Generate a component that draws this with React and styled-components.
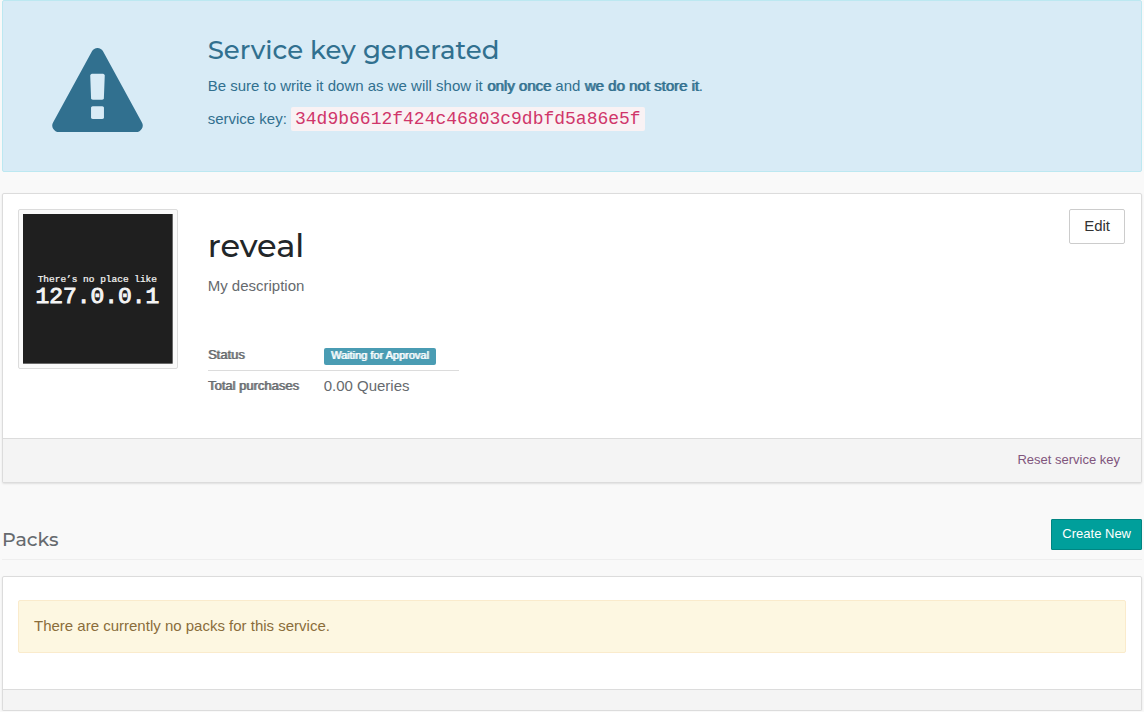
import React from "react";
import styled, { createGlobalStyle } from "styled-components";

const GlobalStyle = createGlobalStyle`
  *, *::before, *::after { box-sizing: border-box; }
  body {
    margin: 0;
    background: #f9f9f9;
    color: #666a6e;
    font: 15px/22px "Liberation Sans", Arial, sans-serif;
  }
  h1, h2, h3, p { margin: 0; }
`;

const headingFont = `Montserrat, Inter, sans-serif`;

const Page = styled.main`
  padding: 0 2px;
`;

const KeyAlert = styled.section`
  display: flex;
  padding: 34px 0 30px;
  margin-bottom: 21px;
  color: #31708f;
  background: #d8ebf6;
  border: 1px solid #bce8f1;
  border-radius: 2px;
`;

const Side = styled.div`
  flex: 0 0 calc(100% / 6);
  padding: 0 15px;
`;

const AlertSide = styled(Side)`
  padding-top: 13px;
`;

const Main = styled.div`
  flex: 1;
  padding: 0 15px;
`;

const WarningIcon = styled.svg`
  display: block;
  width: 91px;
  height: 84px;
  margin: 0 auto;
  fill: currentColor;
`;

const AlertTitle = styled.h2`
  margin-bottom: 9px;
  font: 500 26px/31px ${headingFont};
`;

const Line = styled.p`
  margin-bottom: 11px;
`;

const Strong = styled.strong`
  font-weight: 400;
  text-shadow: 1px 0 color-mix(in srgb, currentColor 85%, transparent);
`;

const Key = styled.code`
  padding: 2px 4px;
  color: #d0366a;
  background: #f9f2f4;
  border-radius: 2px;
  font: 18px/20px "Liberation Mono", monospace;
`;

const Panel = styled.section`
  background: #fff;
  border: 1px solid #dcdcdc;
  border-radius: 2px;
  box-shadow: 0 1px 2px rgba(0, 0, 0, 0.1);
`;

const ServiceBody = styled.div`
  display: flex;
  padding: 15px 0 37px;
`;

const PanelFooter = styled.footer`
  min-height: 21px;
  padding: ${(p) => (p.$filled ? "10px 21px 11px" : "0")};
  text-align: right;
  background: #f4f4f4;
  border-top: 1px solid #dcdcdc;
  font-size: 13px;
`;

const Thumbnail = styled.svg`
  display: block;
  width: 100%;
  padding: 4px;
  background: #fafafa;
  border: 1px solid #dcdcdc;
  border-radius: 2px;
  font-family: "Liberation Mono", monospace;
`;

const ServiceInfo = styled(Main)`
  padding-top: 18px;
`;

const ServiceName = styled.h1`
  margin-bottom: 10px;
  color: #222629;
  font: 500 32px/38px ${headingFont};
`;

const Facts = styled.table`
  width: 251px;
  margin-top: 43px;
  border-collapse: collapse;

  tr + tr { border-top: 1px solid #dcdcdc; }
  th {
    width: 116px;
    padding: 4px 0;
    font-size: 13px;
    font-weight: 400;
    text-align: left;
  }
  td { padding: 4px 0; }
`;

const Badge = styled.span`
  display: block;
  width: max-content;
  padding: 0 7px 2px;
  margin-top: 2px;
  color: #fff;
  background: #4a9cb3;
  border-radius: 2px;
  font-size: 11px;
  line-height: 15px;
`;

const Actions = styled.div`
  padding-right: 16px;
`;

const Button = styled.button`
  padding: ${(p) => (p.$primary ? "3px 10px 5px" : "6px 14px 7px")};
  color: ${(p) => (p.$primary ? "#fff" : "#333")};
  background: ${(p) => (p.$primary ? "#009f9b" : "#fff")};
  border: 1px solid ${(p) => (p.$primary ? "#008582" : "#ccc")};
  border-radius: ${(p) => (p.$primary ? "1px" : "2px")};
  font: inherit;
  font-size: ${(p) => (p.$primary ? "13px" : "15px")};
  line-height: ${(p) => (p.$primary ? "21px" : "20px")};
  cursor: pointer;
`;

const ResetLink = styled.a`
  color: #80557c;
  text-decoration: none;
`;

const SectionHeader = styled.header`
  display: flex;
  justify-content: space-between;
  align-items: center;
  padding-bottom: 9px;
  margin: 36px 0 16px;
  border-bottom: 1px solid #eee;
`;

const SectionTitle = styled.h3`
  padding-top: 10px;
  font: 500 19px/21px ${headingFont};
`;

const PacksBody = styled.div`
  padding: 23px 15px 36px;
`;

const Notice = styled.p`
  padding: 14px 15px 15px;
  color: #8a6d3b;
  background: #fdf7e1;
  border: 1px solid #faebcc;
  border-radius: 2px;
`;

export default function App() {
  return (
    <>
      <GlobalStyle />
      <Page>
        <KeyAlert role="alert">
          <AlertSide>
            <WarningIcon viewBox="0 0 1792 1664" aria-hidden="true">
              <path d="M1024 1375v-190q0-14-9.500-23.500t-22.500-9.500h-192q-13 0-22.500 9.500t-9.500 23.500v190q0 14 9.500 23.500t22.500 9.500h192q13 0 22.500-9.500t9.500-23.500zm-2-374l18-459q0-12-10-19-13-11-24-11h-220q-11 0-24 11-10 7-10 21l17 457q0 10 10 16.500t24 6.500h185q14 0 23.500-6.500t10.500-16.500zm-14-934l768 1408q35 63-2 126-17 29-46.500 46t-63.500 17h-1536q-34 0-63.500-17t-46.500-46q-37-63-2-126l768-1408q17-31 47-49t65-18 65 18 47 49z" />
            </WarningIcon>
          </AlertSide>
          <Main>
            <AlertTitle>Service key generated</AlertTitle>
            <Line>
              Be sure to write it down as we will show it <Strong>only once</Strong> and{" "}
              <Strong>we do not store it</Strong>.
            </Line>
            <Line>
              service key: <Key>34d9b6612f424c46803c9dbfd5a86e5f</Key>
            </Line>
          </Main>
        </KeyAlert>

        <Panel>
          <ServiceBody>
            <Side>
              <Thumbnail viewBox="0 0 300 300" role="img" aria-label="reveal logo">
                <rect width="300" height="300" fill="#1f1f1f" />
                <g fill="#f4f4f4" stroke="#f4f4f4" textAnchor="middle">
                  <text x="149" y="136" fontSize="19" strokeWidth="0.5">There’s no place like</text>
                  <text x="149" y="178" fontSize="46" strokeWidth="2">127.0.0.1</text>
                </g>
              </Thumbnail>
            </Side>
            <ServiceInfo>
              <ServiceName>reveal</ServiceName>
              <p>My description</p>
              <Facts>
                <tbody>
                  <tr>
                    <th scope="row"><Strong>Status</Strong></th>
                    <td><Badge><Strong>Waiting for Approval</Strong></Badge></td>
                  </tr>
                  <tr>
                    <th scope="row"><Strong>Total purchases</Strong></th>
                    <td>0.00 Queries</td>
                  </tr>
                </tbody>
              </Facts>
            </ServiceInfo>
            <Actions>
              <Button type="button">Edit</Button>
            </Actions>
          </ServiceBody>
          <PanelFooter $filled>
            <ResetLink href="#reset">Reset service key</ResetLink>
          </PanelFooter>
        </Panel>

        <SectionHeader>
          <SectionTitle>Packs</SectionTitle>
          <Button type="button" $primary>Create New</Button>
        </SectionHeader>

        <Panel>
          <PacksBody>
            <Notice>There are currently no packs for this service.</Notice>
          </PacksBody>
          <PanelFooter />
        </Panel>
      </Page>
    </>
  );
}
